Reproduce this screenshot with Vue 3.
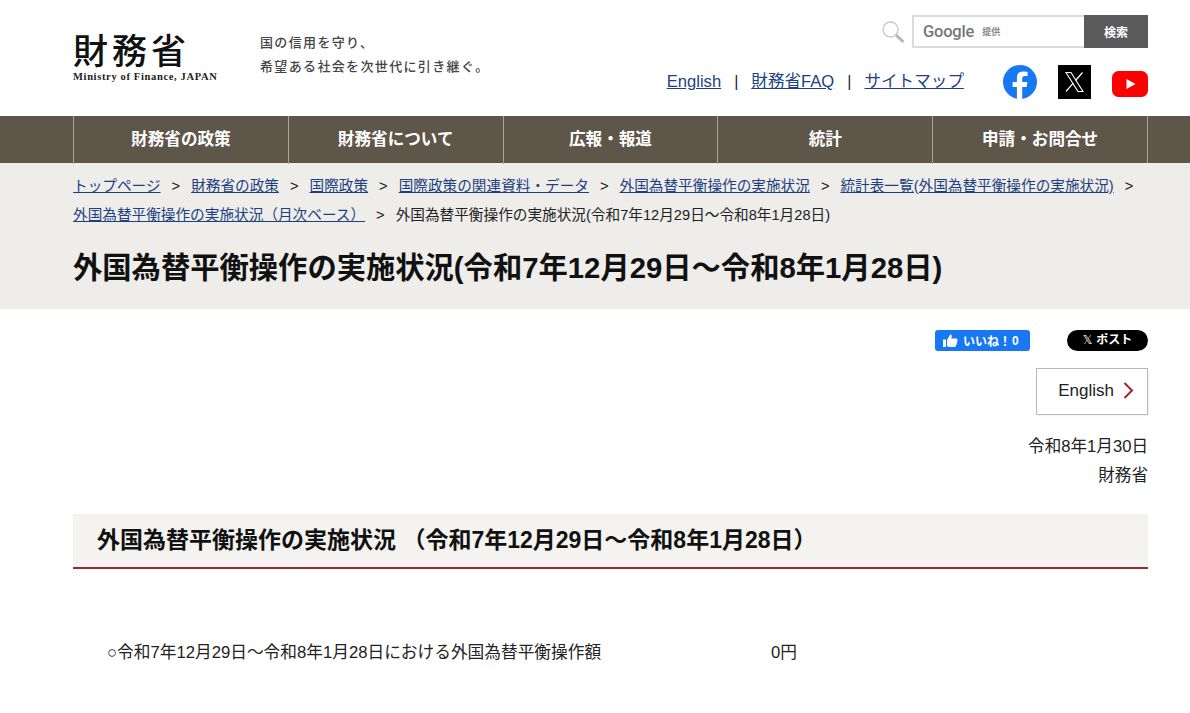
<template>
  <div class="page">
    <header class="header">
      <div class="logo-area">
        <div class="logo">
          <div class="logo-jp">財務省</div>
          <div class="logo-en">Ministry of Finance, JAPAN</div>
        </div>
        <div class="tagline">
          <div>国の信用を守り、</div>
          <div>希望ある社会を次世代に引き継ぐ。</div>
        </div>
      </div>
      <div class="header-right">
        <div class="search">
          <svg class="search-icon" width="24" height="24" viewBox="0 0 24 24">
            <circle cx="9.5" cy="9.5" r="7.5" fill="none" stroke="#c9c9c9" stroke-width="1.4" />
            <path d="M15 15 L22.5 22" stroke="#b5b5b5" stroke-width="3" />
          </svg>
          <div class="search-box">
            <span class="google">Google</span>
            <span class="teikyo">提供</span>
          </div>
          <button class="search-btn">検索</button>
        </div>
        <div class="sub-row">
          <nav class="sub-links">
            <template v-for="(l, i) in subLinks" :key="l">
              <span v-if="i > 0" class="sep">|</span>
              <a href="#">{{ l }}</a>
            </template>
          </nav>
          <div class="sns">
            <svg width="34" height="34" viewBox="0 0 34 34">
              <circle cx="17" cy="17" r="17" fill="#1877f2" />
              <path d="M23.6 21.9 L24.4 17 H19.2 V13.8 C19.2 12.4 19.9 11.1 22 11.1 H24.6 V6.9 C24.6 6.9 22.2 6.5 19.9 6.5 C15.3 6.5 13.9 9.3 13.9 13.3 V17 H9.6 V21.9 H13.9 V34 C15 34.2 16 34.3 17 34.3 C18 34.3 18.2 34.2 19.2 34 V21.9 Z" fill="#fff" />
            </svg>
            <svg width="33" height="34" viewBox="0 0 33 34">
              <rect width="33" height="34" fill="#000" />
              <path d="M8 7.5 H13 L25 26.5 H20 Z" fill="none" stroke="#fff" stroke-width="1.1" />
              <path d="M24.5 7.5 L17.5 15.5 M15.2 18.2 L8 26.5" stroke="#fff" stroke-width="1.2" fill="none" />
            </svg>
            <svg class="yt" width="36" height="26" viewBox="0 0 36 26">
              <rect width="36" height="26" rx="6.5" fill="#f00" />
              <path d="M14.5 8 L23.5 13 L14.5 18 Z" fill="#fff" />
            </svg>
          </div>
        </div>
      </div>
    </header>

    <nav class="gnav">
      <ul class="gnav-list">
        <li v-for="n in gnav" :key="n">{{ n }}</li>
      </ul>
    </nav>

    <section class="title-band">
      <div class="crumbs">
        <template v-for="c in crumbs" :key="c">
          <a href="#">{{ c }}</a><span class="gt">&gt;</span>
        </template>
        <span class="current">外国為替平衡操作の実施状況(令和7年12月29日～令和8年1月28日)</span>
      </div>
      <h1>外国為替平衡操作の実施状況(令和7年12月29日～令和8年1月28日)</h1>
    </section>

    <main class="content">
      <div class="share">
        <span class="like">
          <svg width="15" height="13" viewBox="0 0 15 13">
            <rect x="0" y="5.5" width="3" height="7.5" rx="0.6" fill="#fff" />
            <path d="M4 6 L7.2 0.6 C8.6 0.4 9 1.6 8.7 3 L8.3 4.6 H13 C14.6 4.6 14.8 6 14.2 6.8 C14.6 7.6 14.4 8.4 13.8 8.9 C14 9.8 13.7 10.5 13 10.9 C13.1 12 12.4 13 11.2 13 H6 L4 12 Z" fill="#fff" />
          </svg>
          <span>いいね！</span><span class="like-n">0</span>
        </span>
        <span class="post"><span class="post-x">𝕏</span>ポスト</span>
      </div>
      <div class="lang-row">
        <a class="lang-btn" href="#">
          English
          <svg width="11" height="17" viewBox="0 0 11 17">
            <path d="M1.5 1 L9 8.5 L1.5 16" fill="none" stroke="#a5222c" stroke-width="2" />
          </svg>
        </a>
      </div>
      <div class="meta">
        <div>令和8年1月30日</div>
        <div>財務省</div>
      </div>
      <h2>外国為替平衡操作の実施状況 （令和7年12月29日～令和8年1月28日）</h2>
      <div class="result">
        <span class="result-label">○令和7年12月29日～令和8年1月28日における外国為替平衡操作額</span>
        <span>0円</span>
      </div>
    </main>
  </div>
</template>

<script setup>
const subLinks = ['English', '財務省FAQ', 'サイトマップ']
const gnav = ['財務省の政策', '財務省について', '広報・報道', '統計', '申請・お問合せ']
const crumbs = [
  'トップページ',
  '財務省の政策',
  '国際政策',
  '国際政策の関連資料・データ',
  '外国為替平衡操作の実施状況',
  '統計表一覧(外国為替平衡操作の実施状況)',
  '外国為替平衡操作の実施状況（月次ベース）'
]
</script>

<style>
html, body {
  margin: 0;
  background: #fff;
  overflow: hidden;
}
</style>

<style scoped>
.page {
  width: 1190px;
  height: 713px;
  overflow: hidden;
  font-family: "Liberation Sans", "Noto Sans CJK JP", sans-serif;
  color: #222;
}

.header {
  height: 116px;
  box-sizing: border-box;
  padding: 0 42px 0 73px;
  display: flex;
  justify-content: space-between;
}

.logo-area {
  display: flex;
  padding-top: 29px;
}

.logo {
  width: 187px;
}

.logo-jp {
  font-family: "Noto Sans CJK JP", sans-serif;
  font-size: 35px;
  font-weight: 500;
  line-height: 40px;
  letter-spacing: 4px;
  color: #111;
}

.logo-en {
  margin-top: 1px;
  font-family: "Liberation Serif", serif;
  font-size: 10.5px;
  font-weight: bold;
  line-height: 14px;
  letter-spacing: 0.65px;
  color: #222;
}

.tagline {
  padding-top: 1px;
  font-family: "Noto Sans CJK JP", sans-serif;
  font-size: 13px;
  font-weight: 500;
  line-height: 24px;
  letter-spacing: 1.35px;
  color: #444;
}

.header-right {
  display: flex;
  flex-direction: column;
  align-items: flex-end;
  padding-top: 15px;
}

.search {
  display: flex;
  align-items: center;
}

.search-icon {
  margin-right: 7px;
}

.search-box {
  width: 172px;
  height: 33px;
  box-sizing: border-box;
  border: 2px solid #dcdcdc;
  border-right: 0;
  display: flex;
  align-items: center;
  padding-left: 9px;
}

.google {
  font-family: "Roboto", "Liberation Sans", sans-serif;
  font-size: 16.5px;
  font-weight: 500;
  color: #777;
  letter-spacing: -0.2px;
}

.teikyo {
  font-size: 9px;
  font-weight: bold;
  color: #888;
  margin-left: 8px;
}

.search-btn {
  width: 64px;
  height: 33px;
  border: 0;
  padding: 0;
  background: #5a5a5a;
  color: #fff;
  font-family: inherit;
  font-size: 12px;
  font-weight: bold;
}

.sub-row {
  display: flex;
  align-items: center;
  margin-top: 17px;
}

.sub-links {
  display: flex;
  align-items: center;
  font-size: 16.6px;
  line-height: 34px;
  margin-right: 39px;
}

.sub-links a {
  color: #1d3f82;
}

.sep {
  margin: 0 13px;
  font-size: 16px;
  color: #222;
}

.sns {
  display: flex;
  align-items: center;
  gap: 21px;
}

.sns svg {
  display: block;
}

.sns .yt {
  margin-top: 4px;
}

.gnav {
  height: 47px;
  background: #5e5649;
  padding-left: 73px;
}

.gnav-list {
  list-style: none;
  margin: 0;
  padding: 0;
  width: 1074px;
  height: 47px;
  display: grid;
  grid-template-columns: repeat(5, 1fr);
  border-right: 1px solid #a8a39a;
}

.gnav-list li {
  border-left: 1px solid #a8a39a;
  color: #fff;
  font-size: 16.6px;
  font-weight: bold;
  line-height: 48px;
  text-align: center;
}

.title-band {
  height: 146px;
  box-sizing: border-box;
  background: #eeedea;
  padding: 9px 42px 0 73px;
}

.crumbs {
  font-size: 14.65px;
  line-height: 29px;
  color: #222;
}

.crumbs a {
  color: #1d3f82;
  white-space: nowrap;
}

.gt {
  margin: 0 11px;
}

h1 {
  margin: 20px 0 0;
  font-size: 29.3px;
  line-height: 36px;
  font-weight: bold;
  color: #111;
}

.content {
  padding: 21px 42px 0 73px;
}

.share {
  display: flex;
  justify-content: flex-end;
  gap: 37px;
}

.like {
  width: 95px;
  height: 21px;
  box-sizing: border-box;
  background: #1877f2;
  border-radius: 3px;
  color: #fff;
  font-size: 12px;
  font-weight: bold;
  display: flex;
  align-items: center;
  padding-left: 8px;
  gap: 5px;
}

.like-n {
  margin-left: -4px;
}

.post {
  width: 81px;
  height: 21px;
  background: #000;
  border-radius: 11px;
  color: #fff;
  font-size: 12px;
  font-weight: bold;
  line-height: 19px;
  padding-bottom: 1px;
  box-sizing: border-box;
  display: flex;
  align-items: center;
  justify-content: center;
  gap: 4px;
}

.post-x {
  font-family: "DejaVu Sans", sans-serif;
  font-weight: normal;
  font-size: 12px;
}

.lang-row {
  display: flex;
  justify-content: flex-end;
  margin-top: 17px;
}

.lang-btn {
  width: 112px;
  height: 47px;
  box-sizing: border-box;
  border: 1px solid #b8b8b8;
  box-shadow: 1px 1px 2px rgba(0, 0, 0, 0.06);
  display: flex;
  align-items: center;
  justify-content: flex-end;
  gap: 9px;
  padding: 0 13px 2px 0;
  font-size: 17px;
  color: #222;
  text-decoration: none;
}

.meta {
  margin-top: 17px;
  text-align: right;
  font-size: 16.6px;
  line-height: 29px;
  color: #222;
}

h2 {
  margin: 24px 0 0;
  height: 55px;
  box-sizing: border-box;
  background: #f4f3ef;
  border-bottom: 2px solid #9a2a30;
  padding-left: 24px;
  font-size: 23px;
  line-height: 53px;
  font-weight: bold;
  color: #111;
}

.result {
  margin-top: 72px;
  padding-left: 34px;
  display: flex;
  font-size: 16.7px;
  line-height: 24px;
  color: #222;
}

.result-label {
  width: 664px;
}
</style>
